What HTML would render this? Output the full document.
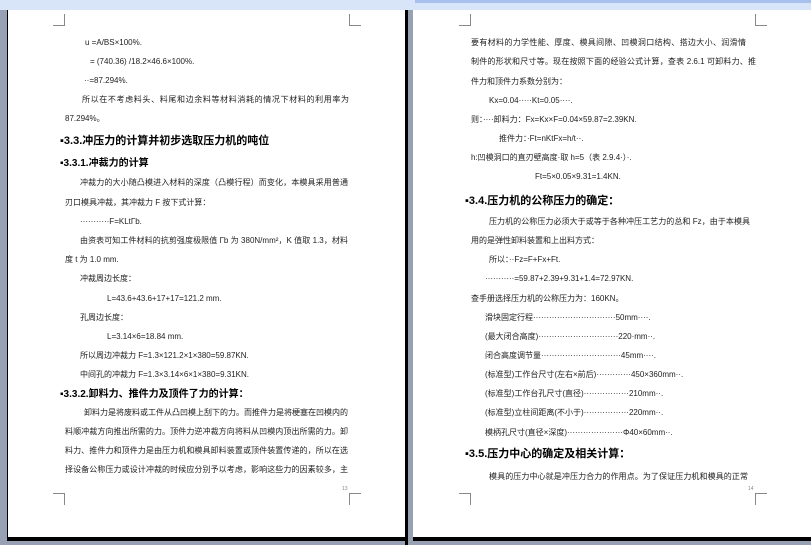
<!DOCTYPE html>
<html><head><meta charset="utf-8"><style>
body{margin:0;width:811px;height:545px;overflow:hidden;background:#98a0b4;position:relative;font-family:"Liberation Sans","Noto Sans CJK SC",sans-serif;color:#222}
.top{position:absolute;left:0;top:0;width:811px;height:10px;background:#d8e4f8}
.ruler{position:absolute;left:415px;top:0;width:396px;height:3px;background:#a8c0ee}
.pg{position:absolute;background:#fff;border-right:3px solid #000;border-bottom:4px solid #000}
.p1{left:8px;top:10px;width:397px;height:527px;border-left:1px solid #000;left:7px}
.p2{left:413px;top:10px;width:398px;height:527px;border-left:0}
.sh{position:absolute;background:#000}
.c{position:absolute;width:11px;height:11px;border-color:#888;border-style:solid;border-width:0}
.l{position:absolute;font-size:8px;line-height:12px;white-space:nowrap}
.j{text-align:justify;text-align-last:justify;white-space:normal;height:12px;overflow:hidden}
.h1{position:absolute;font-size:11px;font-weight:bold;white-space:nowrap;line-height:14px;color:#000}
.h2{position:absolute;font-size:10px;font-weight:bold;white-space:nowrap;line-height:14px;color:#000}
.pn{position:absolute;font-size:5px;color:#888}
</style></head><body>
<div class="top"></div><div class="ruler"></div>
<div class="sh" style="left:405px;top:10px;width:3px;height:535px"></div>
<div class="pg p1"></div>
<div class="pg p2"></div>
<!-- corners page1 -->
<div class="c" style="left:53px;top:14px;border-right-width:1px;border-bottom-width:1px"></div>
<div class="c" style="left:349px;top:14px;border-left-width:1px;border-bottom-width:1px"></div>
<div class="c" style="left:53px;top:493px;border-right-width:1px;border-top-width:1px"></div>
<div class="c" style="left:349px;top:493px;border-left-width:1px;border-top-width:1px"></div>
<!-- corners page2 -->
<div class="c" style="left:459px;top:14px;border-right-width:1px;border-bottom-width:1px"></div>
<div class="c" style="left:755px;top:14px;border-left-width:1px;border-bottom-width:1px"></div>
<div class="c" style="left:459px;top:493px;border-right-width:1px;border-top-width:1px"></div>
<div class="c" style="left:755px;top:493px;border-left-width:1px;border-top-width:1px"></div>

<!-- page 1 -->
<div class="l" style="left:85px;top:37px">u =A/BS×100%.</div>
<div class="l" style="left:90px;top:56px">= (740.36) /18.2×46.6×100%.</div>
<div class="l" style="left:84px;top:75px">··=87.294%.</div>
<div class="l j" style="left:82px;top:94px;width:267px">所以在不考虑料头、料尾和边余料等材料消耗的情况下材料的利用率为</div>
<div class="l" style="left:65px;top:113px">87.294%。</div>
<div class="h1" style="left:60px;top:134px">▪3.3.冲压力的计算并初步选取压力机的吨位</div>
<div class="h2" style="left:60px;top:157px">▪3.3.1.冲裁力的计算</div>
<div class="l j" style="left:80px;top:177px;width:268px">冲裁力的大小随凸模进入材料的深度（凸模行程）而变化，本模具采用普通平</div>
<div class="l" style="left:65px;top:197px">刃口模具冲裁，其冲裁力 F 按下式计算：</div>
<div class="l" style="left:80px;top:216px">···········F=KLtГb.</div>
<div class="l j" style="left:80px;top:235px;width:268px">由资表可知工件材料的抗剪强度极限值 Гb 为 380N/mm²，K 值取 1.3，材料厚</div>
<div class="l" style="left:65px;top:254px">度 t 为 1.0 mm.</div>
<div class="l" style="left:80px;top:273px">冲裁周边长度：</div>
<div class="l" style="left:107px;top:293px">L=43.6+43.6+17+17=121.2 mm.</div>
<div class="l" style="left:80px;top:312px">孔周边长度：</div>
<div class="l" style="left:107px;top:331px">L=3.14×6=18.84 mm.</div>
<div class="l" style="left:80px;top:350px">所以周边冲裁力 F=1.3×121.2×1×380=59.87KN.</div>
<div class="l" style="left:80px;top:369px">中间孔的冲裁力 F=1.3×3.14×6×1×380=9.31KN.</div>
<div class="h2" style="left:60px;top:388px">▪3.3.2.卸料力、推件力及顶件了力的计算：</div>
<div class="l j" style="left:84px;top:407px;width:264px">卸料力是将废料或工件从凸凹模上刮下的力。而推件力是将梗塞在凹模内的</div>
<div class="l j" style="left:65px;top:426px;width:283px">料顺冲裁方向推出所需的力。顶件力逆冲裁方向将料从凹模内顶出所需的力。卸</div>
<div class="l j" style="left:65px;top:445px;width:283px">料力、推件力和顶件力是由压力机和模具卸料装置或顶件装置传递的，所以在选</div>
<div class="l j" style="left:65px;top:464px;width:283px">择设备公称压力或设计冲裁的时候应分别予以考虑，影响这些力的因素较多，主</div>
<div class="pn" style="left:342px;top:486px">13</div>

<!-- page 2 -->
<div class="l j" style="left:471px;top:37px;width:275px">要有材料的力学性能、厚度、模具间隙、凹模洞口结构、搭边大小、润滑情况、</div>
<div class="l j" style="left:471px;top:56px;width:285px">制件的形状和尺寸等。现在按照下面的经验公式计算，查表 2.6.1 可卸料力、推</div>
<div class="l" style="left:471px;top:76px">件力和顶件力系数分别为：</div>
<div class="l" style="left:489px;top:95px">Kx=0.04·····Kt=0.05····.</div>
<div class="l" style="left:471px;top:114px">则：····卸料力：Fx=Kx×F=0.04×59.87=2.39KN.</div>
<div class="l" style="left:499px;top:133px">推件力：·Ft=nKtFx=h/t··.</div>
<div class="l" style="left:471px;top:152px">h:凹模洞口的直刃壁高度·取 h=5（表 2.9.4·）·.</div>
<div class="l" style="left:535px;top:171px">Ft=5×0.05×9.31=1.4KN.</div>
<div class="h1" style="left:465px;top:194px">▪3.4.压力机的公称压力的确定：</div>
<div class="l j" style="left:489px;top:216px;width:261px">压力机的公称压力必须大于或等于各种冲压工艺力的总和 Fz，由于本模具采</div>
<div class="l" style="left:471px;top:235px">用的是弹性卸料装置和上出料方式：</div>
<div class="l" style="left:489px;top:254px">所以：··Fz=F+Fx+Ft.</div>
<div class="l" style="left:485px;top:273px">···········=59.87+2.39+9.31+1.4=72.97KN.</div>
<div class="l" style="left:471px;top:293px">查手册选择压力机的公称压力为：160KN。</div>
<div class="l" style="left:485px;top:312px">滑块固定行程·······························50mm····.</div>
<div class="l" style="left:485px;top:331px">(最大闭合高度)······························220·mm··.</div>
<div class="l" style="left:485px;top:350px">闭合高度调节量······························45mm····.</div>
<div class="l" style="left:485px;top:369px">(标准型)工作台尺寸(左右×前后)·············450×360mm··.</div>
<div class="l" style="left:485px;top:388px">(标准型)工作台孔尺寸(直径)·················210mm··.</div>
<div class="l" style="left:485px;top:407px">(标准型)立柱间距离(不小于)·················220mm··.</div>
<div class="l" style="left:485px;top:427px">模柄孔尺寸(直径×深度)·····················Φ40×60mm··.</div>
<div class="h1" style="left:465px;top:447px">▪3.5.压力中心的确定及相关计算：</div>
<div class="l j" style="left:489px;top:471px;width:259px">模具的压力中心就是冲压力合力的作用点。为了保证压力机和模具的正常工</div>
<div class="pn" style="left:748px;top:486px">14</div>
</body></html>
